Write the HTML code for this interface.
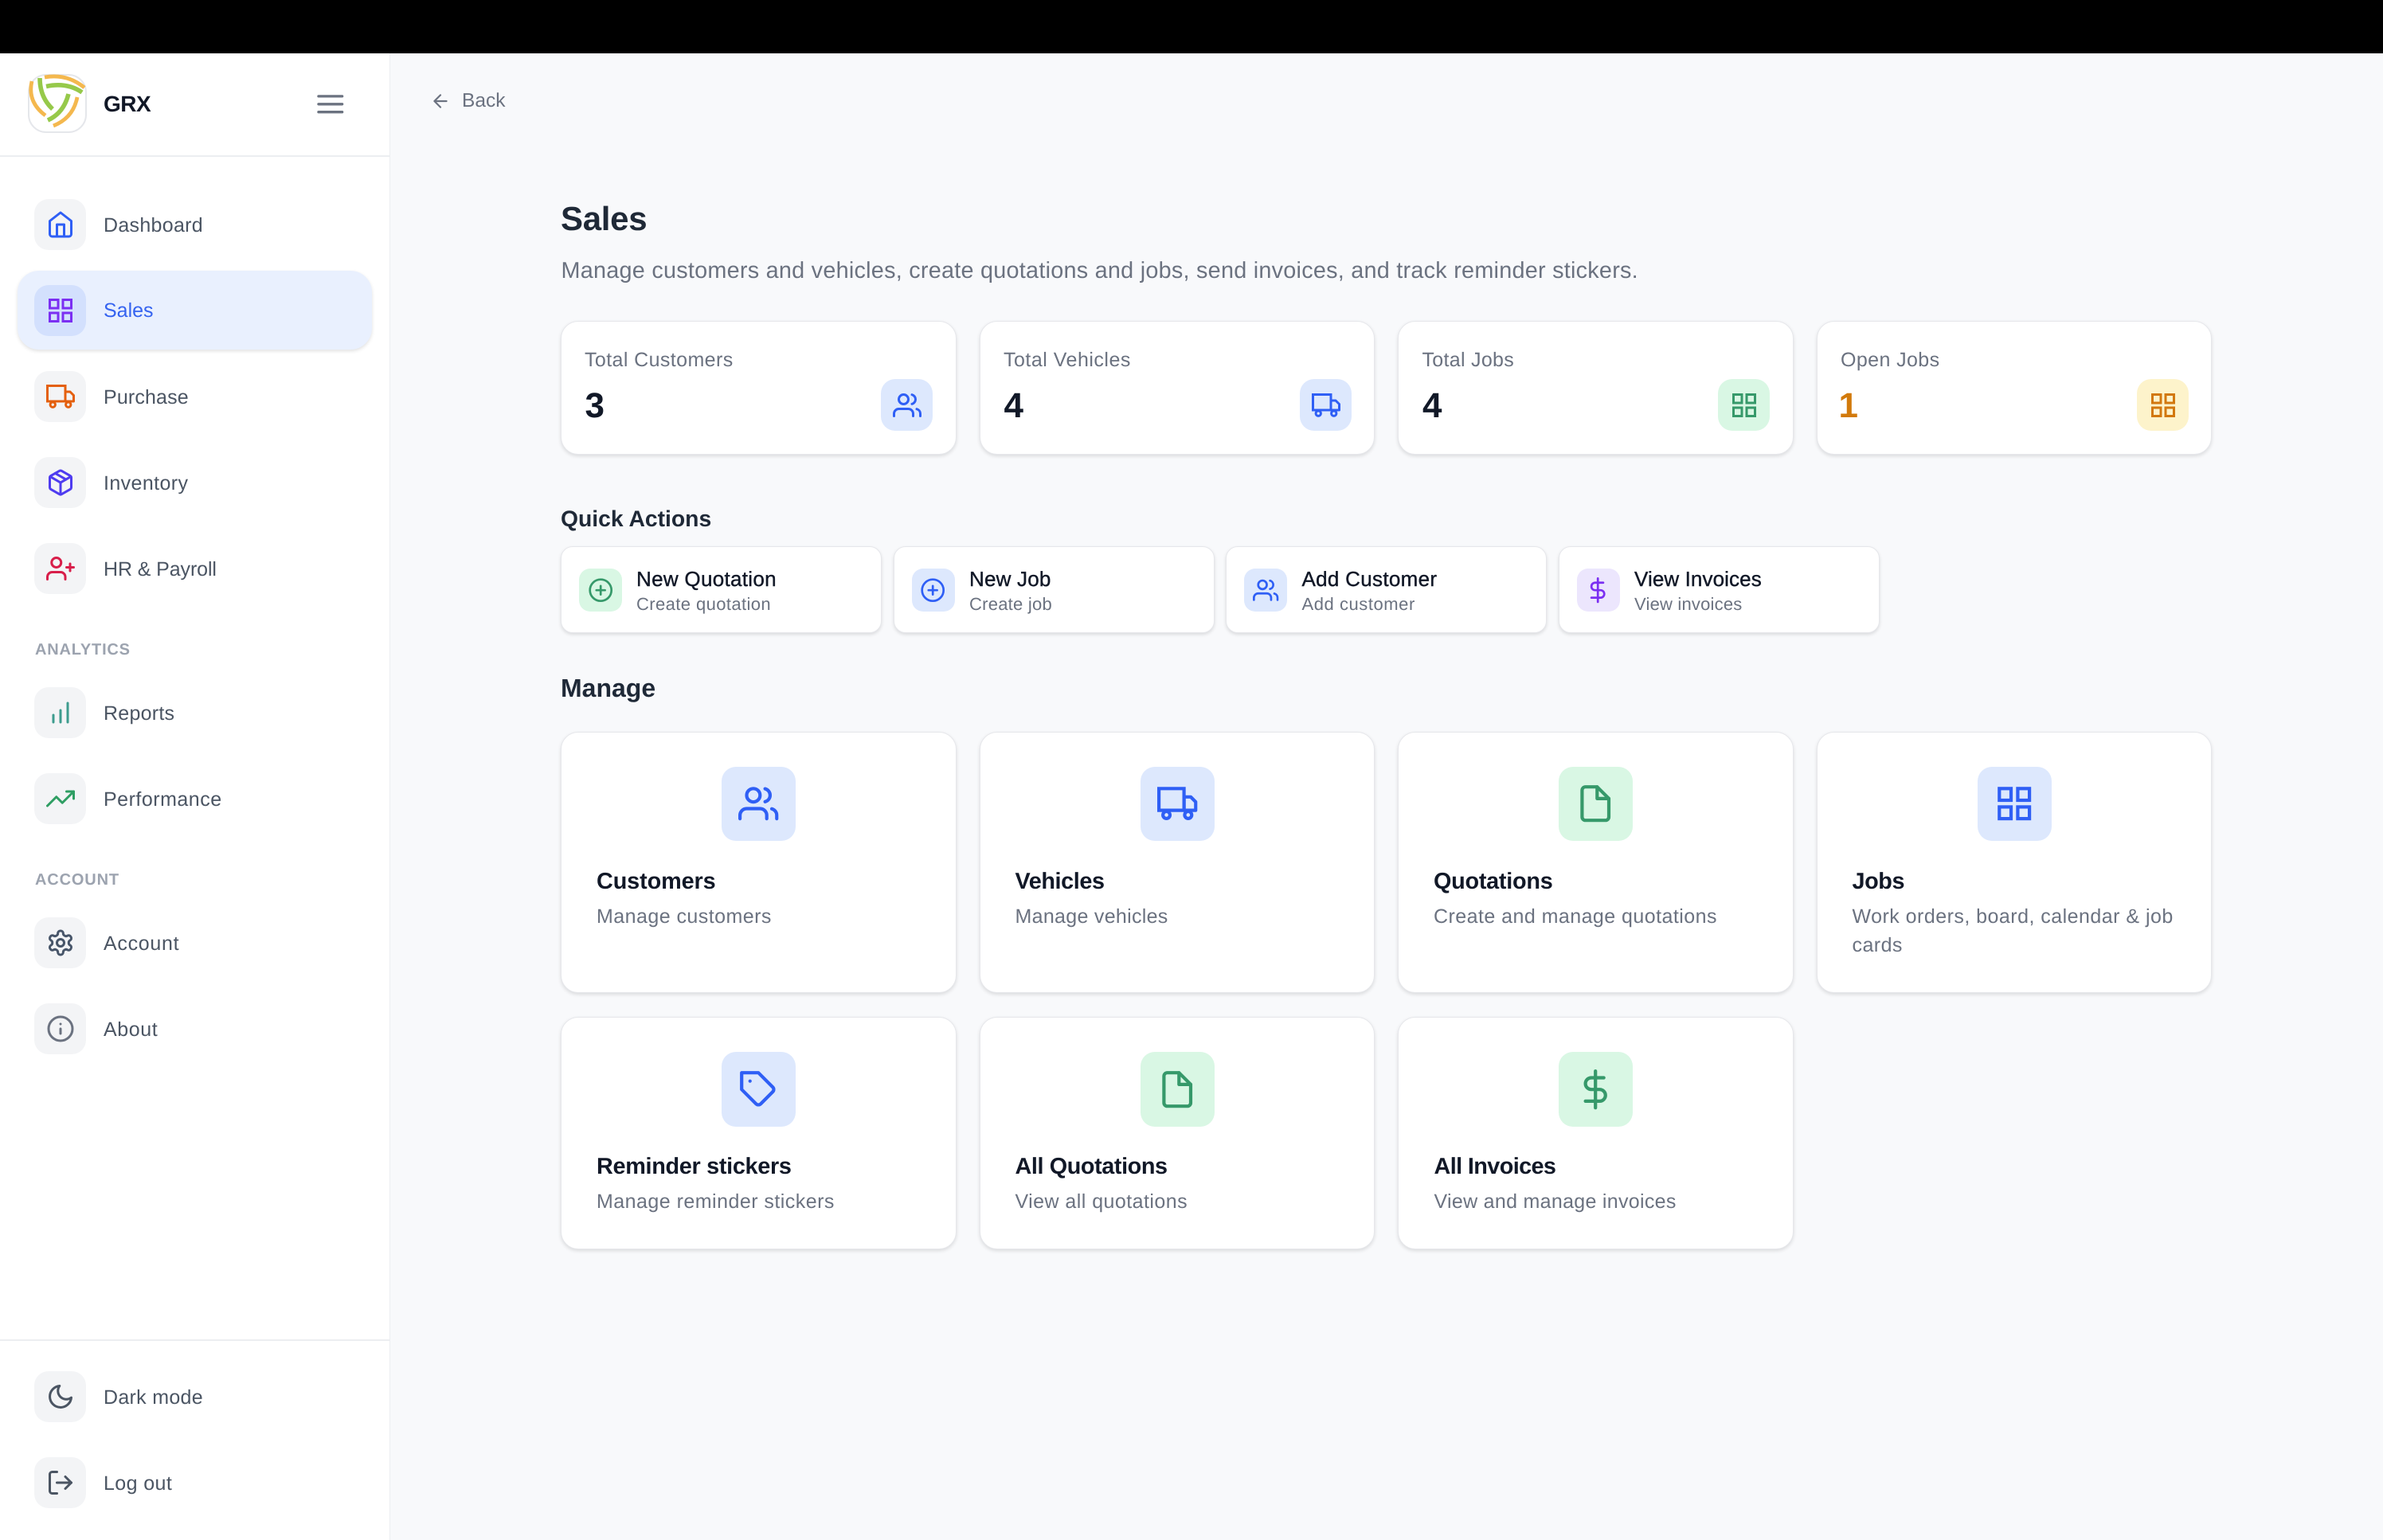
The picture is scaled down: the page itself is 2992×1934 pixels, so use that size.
<!DOCTYPE html>
<html lang="en">
<head>
<meta charset="utf-8">
<title>Sales</title>
<style>
html,body{margin:0;padding:0;width:2992px;height:1934px;overflow:hidden;background:#f8f9fb;font-family:"Liberation Sans",Arial,sans-serif;text-rendering:geometricPrecision}
.abs,.t,.i,.c,.q,.tile{position:absolute}
#bar{left:0;top:0;width:2992px;height:67px;background:#000}
#side{left:0;top:67px;width:490px;height:1867px;background:#fff;border-right:1px solid #eceef1;box-sizing:border-box}
.t{white-space:nowrap;line-height:0;top:calc(var(--y)*1px - .3465em)}
.n{left:130px;font-size:25px;color:#4b5563}
.sec{left:44px;font-size:20px;font-weight:700;color:#9ca3af}
.lab{font-size:25px;color:#6b7280}
.num{font-size:44px;font-weight:700;color:#111827}
.h2{left:704px;font-weight:700;color:#1f2937}
.qt{font-size:26px;color:#111827;-webkit-text-stroke:.4px #111827}
.qs{font-size:22px;color:#6b7280}
.mt{font-size:28.8px;font-weight:700;color:#111827}
.md{font-size:25px;color:#6b7280}
.i{fill:none;stroke:currentColor;stroke-width:2;stroke-linecap:round;stroke-linejoin:round;overflow:visible}
.tile{border-radius:18px}
.nt{left:43px;width:65px;height:64px;background:#f3f4f6}
.c{box-sizing:border-box;background:#fff;border:1.8px solid #e6e7eb;border-radius:22px;box-shadow:0 2px 5px rgba(0,0,0,.12);margin-left:-1px}
.q{box-sizing:border-box;background:#fff;border:1.8px solid #e6e7eb;border-radius:15px;box-shadow:0 2px 4px rgba(0,0,0,.12);top:686px;width:403px;height:109px;margin-left:-1px}
.st{top:403px;width:496.5px;height:168px}
.s36{width:36px;height:36px}
.s32{width:32.4px;height:32.4px;top:724.8px}
.s50{width:50.4px;height:50.4px}
.blue{background:#dde8fd}.green{background:#d9f7e4}.yellow{background:#fdf3cb}.violet{background:#ece6fd}
.cb{color:#2f5ff5}.cg{color:#36996a}.cy{color:#d2780f}.cv{color:#7b2ff2}
</style>
</head>
<body>
<svg width="0" height="0" style="position:absolute">
<symbol id="home" viewBox="0 0 24 24"><path d="M3 9l9-7 9 7v11a2 2 0 0 1-2 2H5a2 2 0 0 1-2-2z"/><path d="M9 22V12h6v10"/></symbol>
<symbol id="grid" viewBox="0 0 24 24"><g stroke-linejoin="miter"><rect x="3" y="3" width="7" height="7"/><rect x="14" y="3" width="7" height="7"/><rect x="14" y="14" width="7" height="7"/><rect x="3" y="14" width="7" height="7"/></g></symbol>
<symbol id="truck" viewBox="0 0 24 24"><path d="M1 3h15v13H1z" stroke-linejoin="miter"/><path d="M16 8h4l3 3v5h-7z"/><circle cx="5.500" cy="18.800" r="2.100"/><circle cx="18.500" cy="18.800" r="2.100"/></symbol>
<symbol id="box" viewBox="0 0 24 24"><path d="M16.5 9.4l-9-5.19"/><path d="M21 16V8a2 2 0 0 0-1-1.73l-7-4a2 2 0 0 0-2 0l-7 4A2 2 0 0 0 3 8v8a2 2 0 0 0 1 1.73l7 4a2 2 0 0 0 2 0l7-4A2 2 0 0 0 21 16z"/><path d="M3.27 6.96L12 12.01l8.73-5.05"/><path d="M12 22.08V12"/></symbol>
<symbol id="uplus" viewBox="0 0 24 24"><path d="M16 21v-2a4 4 0 0 0-4-4H5a4 4 0 0 0-4 4v2"/><circle cx="8.5" cy="7" r="4"/><path d="M20 8v6M23 11h-6"/></symbol>
<symbol id="bars" viewBox="0 0 24 24"><path d="M18 20V4M12 20V10M6 20v-6"/></symbol>
<symbol id="trend" viewBox="0 0 24 24"><path d="M23 6l-9.5 9.5-5-5L1 18"/><path d="M17 6h6v6"/></symbol>
<symbol id="gear" viewBox="0 0 24 24"><path d="M12.22 2h-.44a2 2 0 0 0-2 2v.18a2 2 0 0 1-1 1.73l-.43.25a2 2 0 0 1-2 0l-.15-.08a2 2 0 0 0-2.73.73l-.22.38a2 2 0 0 0 .73 2.73l.15.1a2 2 0 0 1 1 1.72v.51a2 2 0 0 1-1 1.74l-.15.09a2 2 0 0 0-.73 2.73l.22.38a2 2 0 0 0 2.73.73l.15-.08a2 2 0 0 1 2 0l.43.25a2 2 0 0 1 1 1.73V20a2 2 0 0 0 2 2h.44a2 2 0 0 0 2-2v-.18a2 2 0 0 1 1-1.73l.43-.25a2 2 0 0 1 2 0l.15.08a2 2 0 0 0 2.73-.73l.22-.39a2 2 0 0 0-.73-2.73l-.15-.08a2 2 0 0 1-1-1.74v-.5a2 2 0 0 1 1-1.74l.15-.09a2 2 0 0 0 .73-2.73l-.22-.38a2 2 0 0 0-2.73-.73l-.15.08a2 2 0 0 1-2 0l-.43-.25a2 2 0 0 1-1-1.73V4a2 2 0 0 0-2-2z"/><circle cx="12" cy="12" r="3"/></symbol>
<symbol id="info" viewBox="0 0 24 24"><circle cx="12" cy="12" r="10"/><path d="M12 16v-4M12 8h.01"/></symbol>
<symbol id="moon" viewBox="0 0 24 24"><path d="M21 12.79A9 9 0 1 1 11.21 3 7 7 0 0 0 21 12.79z"/></symbol>
<symbol id="logout" viewBox="0 0 24 24"><path d="M9 21H5a2 2 0 0 1-2-2V5a2 2 0 0 1 2-2h4"/><path d="M16 17l5-5-5-5"/><path d="M21 12H9"/></symbol>
<symbol id="users" viewBox="0 0 24 24"><path d="M17 21v-2a4 4 0 0 0-4-4H5a4 4 0 0 0-4 4v2"/><circle cx="9" cy="7" r="4"/><path d="M23 21v-2a4 4 0 0 0-3-3.87"/><path d="M16 3.13a4 4 0 0 1 0 7.75"/></symbol>
<symbol id="plus" viewBox="0 0 24 24"><circle cx="12" cy="12" r="10"/><path d="M12 8v8M8 12h8"/></symbol>
<symbol id="dollar" viewBox="0 0 24 24"><path d="M12 1v22"/><path d="M17 5H9.5a3.5 3.5 0 0 0 0 7h5a3.5 3.5 0 0 1 0 7H6"/></symbol>
<symbol id="file" viewBox="0 0 24 24"><path d="M13 2H6a2 2 0 0 0-2 2v16a2 2 0 0 0 2 2h12a2 2 0 0 0 2-2V9z"/><path d="M13 2v7h7"/></symbol>
<symbol id="tag" viewBox="0 0 24 24"><path d="M20.59 13.41l-7.17 7.17a2 2 0 0 1-2.83 0L2 12V2h10l8.59 8.59a2 2 0 0 1 0 2.82z"/><path d="M7 7h.01"/></symbol>
</svg>

<div class="abs" id="bar"></div>
<div class="abs" id="side"></div>
<div class="abs" style="left:0;top:195px;width:489px;height:1.5px;background:#eceef1"></div>
<div class="abs" style="left:0;top:1682px;width:489px;height:1.5px;background:#eceef1"></div>

<!-- logo -->
<div class="abs" style="left:35px;top:92.5px;width:74px;height:74px;box-sizing:border-box;border:2px solid #e5e7eb;border-radius:23px;background:#fff"></div>
<svg class="abs" style="left:0;top:0" width="130" height="180" fill="none" stroke-linecap="butt">
<g stroke="#f4b84e" stroke-width="4.800">
<path d="M56 97Q84 92 106 110"/>
<path d="M40 102Q34 128 57 145"/>
<path d="M97 122Q92 148 67 158"/>
</g>
<g stroke="#96c94a" stroke-width="5.600">
<path d="M58 108.500Q84 103 103 116"/>
<path d="M50 98Q50 122 66 137"/>
<path d="M86 118Q80 142 60 151"/>
</g>
</svg>
<div class="t" style="left:130px;--y:141;font-size:28px;font-weight:700;color:#111827;letter-spacing:-.5px">GRX</div>
<svg class="i" style="left:394.700px;top:111px;width:39.600px;height:39.600px;color:#6b7280" viewBox="0 0 24 24"><path d="M3 6h18M3 12h18M3 18h18"/></svg>

<!-- nav -->
<div class="tile nt" style="top:250px"></div>
<svg class="i s36" style="left:58px;top:264px;color:#2f5ff5"><use href="#home"/></svg>
<div class="t n" style="--y:291.5;letter-spacing:.3px">Dashboard</div>

<div class="abs" style="left:22px;top:340px;width:445px;height:99px;background:#e9f0fe;border-radius:27px;box-shadow:0 2px 5px rgba(0,0,0,.12)"></div>
<div class="tile nt" style="top:358px;background:#d3e0fd"></div>
<svg class="i s36" style="left:58px;top:372px;color:#7b2ff2"><use href="#grid"/></svg>
<div class="t n" style="--y:399;color:#3563f0">Sales</div>

<div class="tile nt" style="top:466px"></div>
<svg class="i s36" style="left:58px;top:480px;color:#e4600f"><use href="#truck"/></svg>
<div class="t n" style="--y:507.5;letter-spacing:.15px">Purchase</div>

<div class="tile nt" style="top:574px"></div>
<svg class="i s36" style="left:58px;top:588px;color:#4f3cf0"><use href="#box"/></svg>
<div class="t n" style="--y:615.5;letter-spacing:.4px">Inventory</div>

<div class="tile nt" style="top:682px"></div>
<svg class="i s36" style="left:58px;top:696px;color:#d81e4a"><use href="#uplus"/></svg>
<div class="t n" style="--y:723.5;letter-spacing:-.1px">HR &amp; Payroll</div>

<div class="t sec" style="--y:822.5;letter-spacing:.8px">ANALYTICS</div>

<div class="tile nt" style="top:862.5px"></div>
<svg class="i s36" style="left:58px;top:877px;color:#3d9c8e"><use href="#bars"/></svg>
<div class="t n" style="--y:904.5;letter-spacing:.25px">Reports</div>

<div class="tile nt" style="top:971px"></div>
<svg class="i s36" style="left:58px;top:985px;color:#2f9e63"><use href="#trend"/></svg>
<div class="t n" style="--y:1012.5;letter-spacing:.5px">Performance</div>

<div class="t sec" style="--y:1111.5;letter-spacing:.85px">ACCOUNT</div>

<div class="tile nt" style="top:1151.5px"></div>
<svg class="i s36" style="left:58px;top:1166px;color:#475569"><use href="#gear"/></svg>
<div class="t n" style="--y:1193.5;letter-spacing:.7px">Account</div>

<div class="tile nt" style="top:1259.5px"></div>
<svg class="i s36" style="left:58px;top:1274px;color:#6b7280"><use href="#info"/></svg>
<div class="t n" style="--y:1301.5;letter-spacing:.6px">About</div>

<div class="tile nt" style="top:1722px"></div>
<svg class="i s36" style="left:58px;top:1736px;color:#4b5563"><use href="#moon"/></svg>
<div class="t n" style="--y:1763.5;letter-spacing:.3px">Dark mode</div>

<div class="tile nt" style="top:1830px"></div>
<svg class="i s36" style="left:58px;top:1844px;color:#4b5563"><use href="#logout"/></svg>
<div class="t n" style="--y:1871.5;letter-spacing:.4px">Log out</div>

<!-- header -->
<svg class="i" style="left:539.500px;top:113.500px;width:26px;height:26px;color:#6b7280" viewBox="0 0 24 24"><path d="M19 12H5M12 19l-7-7 7-7"/></svg>
<div class="t lab" style="left:580px;--y:135;font-size:24.5px">Back</div>
<div class="t" style="left:704px;--y:289.5;font-size:42px;font-weight:700;color:#1f2937;letter-spacing:-.3px">Sales</div>
<div class="t" style="left:704.500px;--y:349.5;font-size:28.8px;color:#6b7280;letter-spacing:.25px">Manage customers and vehicles, create quotations and jobs, send invoices, and track reminder stickers.</div>

<!-- stats -->
<div class="c st" style="left:705px"></div>
<div class="t lab" style="left:734px;--y:461;letter-spacing:.4px">Total Customers</div>
<div class="t num" style="left:734.500px;--y:525">3</div>
<div class="tile blue" style="left:1106px;top:476px;width:65px;height:65px"></div>
<svg class="i s36 cb" style="left:1121px;top:490.500px"><use href="#users"/></svg>

<div class="c st" style="left:1230.500px"></div>
<div class="t lab" style="left:1260px;--y:461;letter-spacing:.5px">Total Vehicles</div>
<div class="t num" style="left:1260.500px;--y:525">4</div>
<div class="tile blue" style="left:1632px;top:476px;width:65px;height:65px"></div>
<svg class="i s36 cb" style="left:1646.500px;top:490.500px"><use href="#truck"/></svg>

<div class="c st" style="left:1756px"></div>
<div class="t lab" style="left:1785.500px;--y:461;letter-spacing:.3px">Total Jobs</div>
<div class="t num" style="left:1786px;--y:525">4</div>
<div class="tile green" style="left:2157px;top:476px;width:65px;height:65px"></div>
<svg class="i s36 cg" style="left:2171.500px;top:490.500px"><use href="#grid"/></svg>

<div class="c st" style="left:2281.500px"></div>
<div class="t lab" style="left:2311px;--y:461;letter-spacing:.4px">Open Jobs</div>
<div class="t num" style="left:2308.500px;--y:525;color:#d27a0b">1</div>
<div class="tile yellow" style="left:2683px;top:476px;width:65px;height:65px"></div>
<svg class="i s36 cy" style="left:2697.500px;top:490.500px"><use href="#grid"/></svg>

<!-- quick actions -->
<div class="t h2" style="--y:660.5;font-size:28.3px">Quick Actions</div>

<div class="q" style="left:705px"></div>
<div class="tile green" style="left:727px;top:714px;width:54px;height:54px;border-radius:14px"></div>
<svg class="i s32 cg" style="left:737.800px"><use href="#plus"/></svg>
<div class="t qt" style="left:799px;--y:736;letter-spacing:.3px">New Quotation</div>
<div class="t qs" style="left:799px;--y:767;letter-spacing:.4px">Create quotation</div>

<div class="q" style="left:1122.700px"></div>
<div class="tile blue" style="left:1144.500px;top:714px;width:54px;height:54px;border-radius:14px"></div>
<svg class="i s32 cb" style="left:1155.300px"><use href="#plus"/></svg>
<div class="t qt" style="left:1217px;--y:736;letter-spacing:.2px">New Job</div>
<div class="t qs" style="left:1217px;--y:767;letter-spacing:.25px">Create job</div>

<div class="q" style="left:1540px"></div>
<div class="tile blue" style="left:1562px;top:714px;width:54px;height:54px;border-radius:14px"></div>
<svg class="i s32 cb" style="left:1572.800px"><use href="#users"/></svg>
<div class="t qt" style="left:1634.500px;--y:736;letter-spacing:.3px">Add Customer</div>
<div class="t qs" style="left:1634.500px;--y:767;letter-spacing:.55px">Add customer</div>

<div class="q" style="left:1957.500px"></div>
<div class="tile violet" style="left:1979.500px;top:714px;width:54px;height:54px;border-radius:14px"></div>
<svg class="i s32 cv" style="left:1990.300px"><use href="#dollar"/></svg>
<div class="t qt" style="left:2052px;--y:736;letter-spacing:.1px">View Invoices</div>
<div class="t qs" style="left:2052px;--y:767;letter-spacing:.2px">View invoices</div>

<!-- manage -->
<div class="t h2" style="--y:875;font-size:32px">Manage</div>

<div class="c" style="left:705px;top:919px;width:496.500px;height:328px"></div>
<div class="tile blue" style="left:906px;top:963px;width:93px;height:93px"></div>
<svg class="i s50 cb" style="left:927.300px;top:984.300px"><use href="#users"/></svg>
<div class="t mt" style="left:749px;--y:1117;letter-spacing:-.1px">Customers</div>
<div class="t md" style="left:749px;--y:1159.5;letter-spacing:.45px">Manage customers</div>

<div class="c" style="left:1230.500px;top:919px;width:496.500px;height:328px"></div>
<div class="tile blue" style="left:1431.500px;top:963px;width:93px;height:93px"></div>
<svg class="i s50 cb" style="left:1452.800px;top:984.300px"><use href="#truck"/></svg>
<div class="t mt" style="left:1274.500px;--y:1117;letter-spacing:-.4px">Vehicles</div>
<div class="t md" style="left:1274.500px;--y:1159.5;letter-spacing:.3px">Manage vehicles</div>

<div class="c" style="left:1756px;top:919px;width:496.500px;height:328px"></div>
<div class="tile green" style="left:1957px;top:963px;width:93px;height:93px"></div>
<svg class="i s50 cg" style="left:1978.300px;top:984.300px"><use href="#file"/></svg>
<div class="t mt" style="left:1800px;--y:1117;letter-spacing:-.25px">Quotations</div>
<div class="t md" style="left:1800px;--y:1159.5;letter-spacing:.45px">Create and manage quotations</div>

<div class="c" style="left:2281.500px;top:919px;width:496.500px;height:328px"></div>
<div class="tile blue" style="left:2483px;top:963px;width:93px;height:93px"></div>
<svg class="i s50 cb" style="left:2504.300px;top:984.300px"><use href="#grid"/></svg>
<div class="t mt" style="left:2325.500px;--y:1117;letter-spacing:-.4px">Jobs</div>
<div class="t md" style="left:2325.500px;--y:1159.5;letter-spacing:.47px">Work orders, board, calendar &amp; job</div>
<div class="t md" style="left:2325.500px;--y:1195.5;letter-spacing:.45px">cards</div>

<div class="c" style="left:705px;top:1277px;width:496.500px;height:292px"></div>
<div class="tile blue" style="left:906px;top:1321px;width:93px;height:94px"></div>
<svg class="i s50 cb" style="left:927.300px;top:1342.800px"><use href="#tag"/></svg>
<div class="t mt" style="left:749px;--y:1475;letter-spacing:-.3px">Reminder stickers</div>
<div class="t md" style="left:749px;--y:1517.5;letter-spacing:.47px">Manage reminder stickers</div>

<div class="c" style="left:1230.500px;top:1277px;width:496.500px;height:292px"></div>
<div class="tile green" style="left:1431.500px;top:1321px;width:93px;height:94px"></div>
<svg class="i s50 cg" style="left:1452.800px;top:1342.800px"><use href="#file"/></svg>
<div class="t mt" style="left:1274.500px;--y:1475;letter-spacing:-.4px">All Quotations</div>
<div class="t md" style="left:1274.500px;--y:1517.5;letter-spacing:.45px">View all quotations</div>

<div class="c" style="left:1756px;top:1277px;width:496.500px;height:292px"></div>
<div class="tile green" style="left:1957px;top:1321px;width:93px;height:94px"></div>
<svg class="i s50 cg" style="left:1978.300px;top:1342.800px"><use href="#dollar"/></svg>
<div class="t mt" style="left:1800.500px;--y:1475;letter-spacing:-.6px">All Invoices</div>
<div class="t md" style="left:1800.500px;--y:1517.5;letter-spacing:.3px">View and manage invoices</div>
</body>
</html>
